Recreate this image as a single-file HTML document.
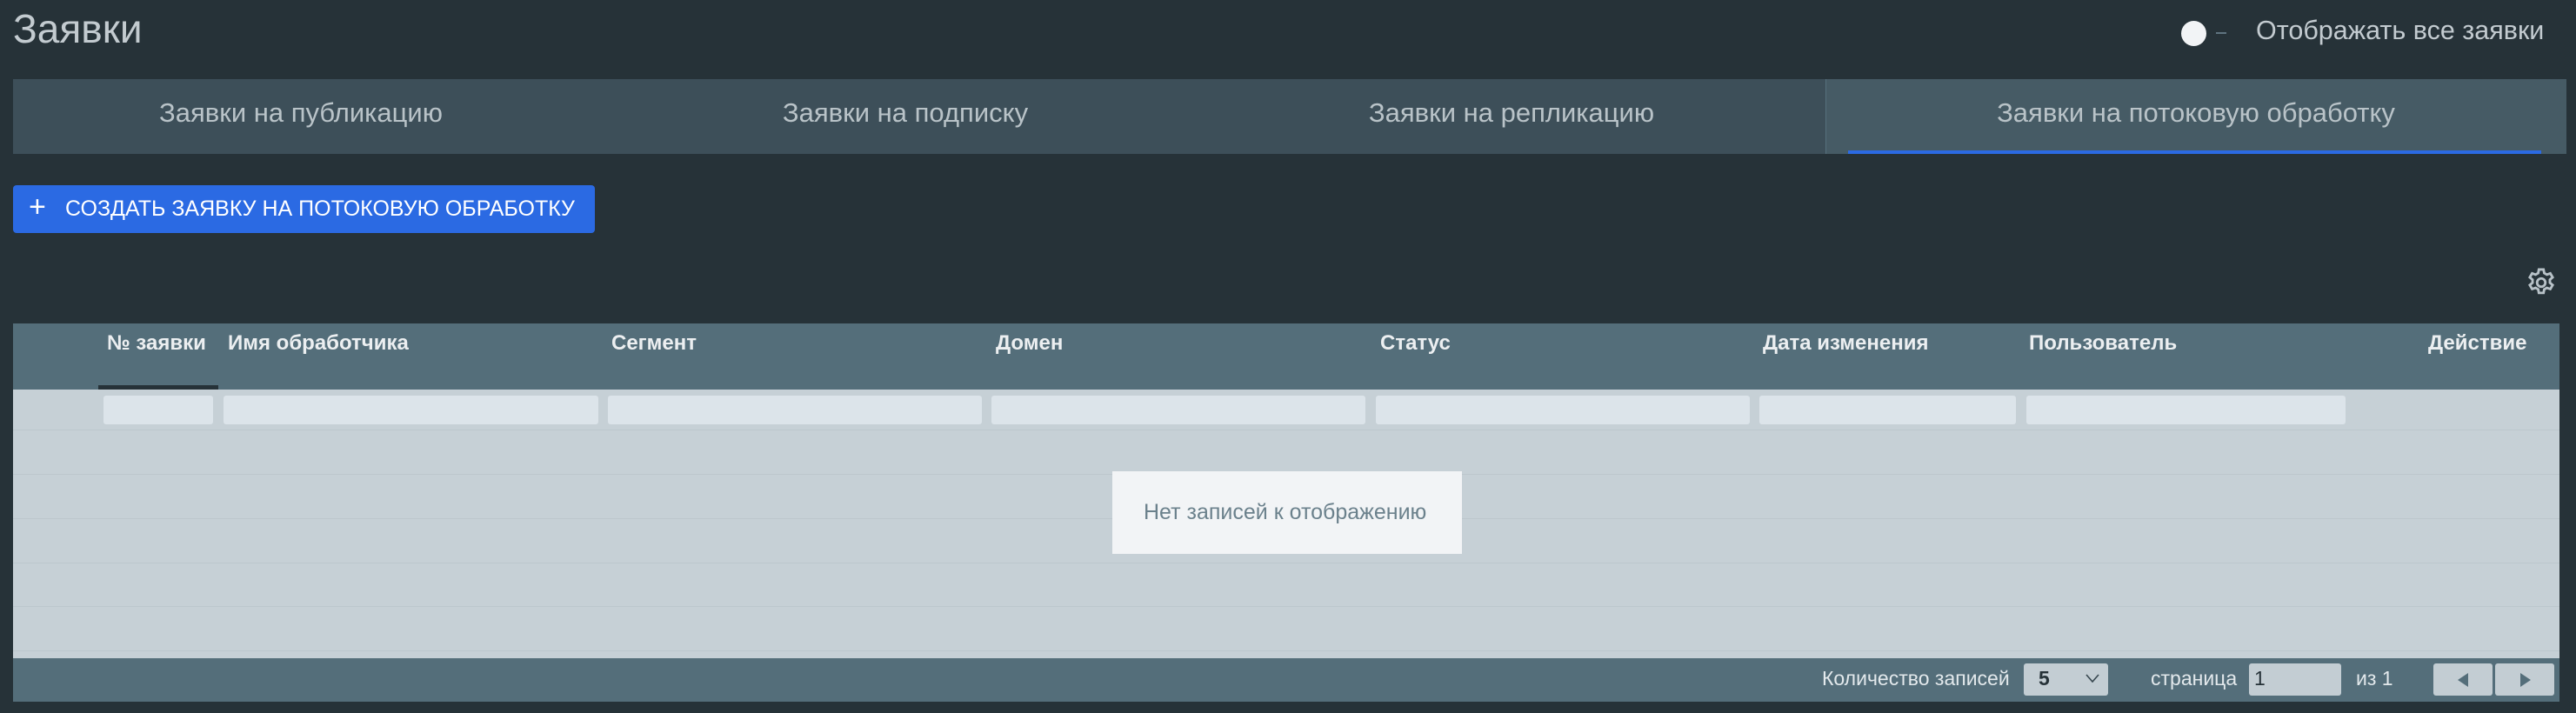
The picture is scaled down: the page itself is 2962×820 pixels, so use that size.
<!DOCTYPE html>
<html><head><meta charset="utf-8"><style>
*{margin:0;padding:0;box-sizing:border-box}
body{width:2962px;height:820px;background:#263238;font-family:"Liberation Sans",sans-serif;position:relative;overflow:hidden}
.a{position:absolute;white-space:nowrap}
.title{left:15px;top:6px;font-size:46px;color:#c3cbd0}
.tabs{left:15px;top:91px;width:2936px;height:86px;background:#3d4f59}
.act{left:2099px;top:91px;width:852px;height:86px;background:#465b65;border-left:1px solid #56707c}
.tt{font-size:31px;color:#b9c3c8;top:112px;transform:translateX(-50%)}
.btn{left:15px;top:213px;width:669px;height:55px;background:#2b6ae3;border-radius:4px;color:#fff;font-size:25px;line-height:55px;padding-left:60px}
.th{font-size:24px;font-weight:bold;color:#eceff1;top:381px}
.fi{top:455px;height:33px;background:#dce4ea;border-radius:3px}
.ft{font-size:23px;color:#e3e9ec;top:767px}
.box{background:#c3cdd3;border-radius:3px;height:37px;top:763px}
</style></head><body>
<div class="a title">Заявки</div>
<div class="a" style="left:2508px;top:24px;width:29px;height:29px;border-radius:50%;background:#f2f4f6"></div>
<div class="a" style="left:2548px;top:37px;width:12px;height:2px;background:#5f7480"></div>
<div class="a" style="left:2594px;top:18px;font-size:30.5px;color:#c3cbd0">Отображать все заявки</div>

<div class="a tabs"></div>
<div class="a act"></div>
<div class="a" style="left:2125px;top:173px;width:797px;height:4px;background:#2b6ae3"></div>
<div class="a tt" style="left:346px">Заявки на публикацию</div>
<div class="a tt" style="left:1041px">Заявки на подписку</div>
<div class="a tt" style="left:1738px">Заявки на репликацию</div>
<div class="a tt" style="left:2525px">Заявки на потоковую обработку</div>

<div class="a btn"><span style="position:absolute;left:18px;top:-2px;font-size:34px;font-weight:300">+</span>СОЗДАТЬ ЗАЯВКУ НА ПОТОКОВУЮ ОБРАБОТКУ</div>

<svg class="a" style="left:2903px;top:306px" width="38" height="38" viewBox="0 0 24 24" fill="none" stroke="#b8c2c8" stroke-width="1.8"><circle cx="12" cy="12" r="3"/><path d="M10.3 2.5h3.4l.5 2.6 1.9 1.1 2.5-.9 1.7 2.9-2 1.7v2.2l2 1.7-1.7 2.9-2.5-.9-1.9 1.1-.5 2.6h-3.4l-.5-2.6-1.9-1.1-2.5.9-1.7-2.9 2-1.7v-2.2l-2-1.7 1.7-2.9 2.5.9 1.9-1.1z"/></svg>

<div class="a" style="left:15px;top:372px;width:2928px;height:76px;background:#546e7a"></div>
<div class="a" style="left:113px;top:443px;width:138px;height:5px;background:#263238"></div>
<div class="a th" style="left:123px">№ заявки</div>
<div class="a th" style="left:262px">Имя обработчика</div>
<div class="a th" style="left:703px">Сегмент</div>
<div class="a th" style="left:1145px">Домен</div>
<div class="a th" style="left:1587px">Статус</div>
<div class="a th" style="left:2027px">Дата изменения</div>
<div class="a th" style="left:2333px">Пользователь</div>
<div class="a th" style="left:2792px">Действие</div>

<div class="a" style="left:15px;top:448px;width:2928px;height:309px;background:#c6d0d6"></div>
<div class="a" style="left:15px;top:494px;width:2928px;height:1px;background:#bcc7cd"></div>
<div class="a" style="left:15px;top:545px;width:2928px;height:1px;background:#bcc7cd"></div>
<div class="a" style="left:15px;top:596px;width:2928px;height:1px;background:#bcc7cd"></div>
<div class="a" style="left:15px;top:647px;width:2928px;height:1px;background:#bcc7cd"></div>
<div class="a" style="left:15px;top:697px;width:2928px;height:1px;background:#bcc7cd"></div>
<div class="a" style="left:15px;top:748px;width:2928px;height:1px;background:#bcc7cd"></div>
<div class="a fi" style="left:119px;width:126px"></div>
<div class="a fi" style="left:257px;width:431px"></div>
<div class="a fi" style="left:699px;width:430px"></div>
<div class="a fi" style="left:1140px;width:430px"></div>
<div class="a fi" style="left:1582px;width:430px"></div>
<div class="a fi" style="left:2023px;width:295px"></div>
<div class="a fi" style="left:2330px;width:367px"></div>

<div class="a" style="left:1279px;top:542px;width:402px;height:95px;background:#f2f4f6"></div>
<div class="a" style="left:1315px;top:575px;font-size:25px;color:#6b818c">Нет записей к отображению</div>

<div class="a" style="left:15px;top:757px;width:2928px;height:50px;background:#546e7a"></div>
<div class="a ft" style="left:2095px">Количество записей</div>
<div class="a box" style="left:2327px;width:97px"></div>
<div class="a" style="left:2344px;top:767px;font-size:23px;font-weight:bold;color:#263238">5</div>
<svg class="a" style="left:2398px;top:774px" width="16" height="12" viewBox="0 0 16 12"><path d="M1 2l7 8 7-8" fill="none" stroke="#37474f" stroke-width="1.6"/></svg>
<div class="a ft" style="left:2473px">страница</div>
<div class="a box" style="left:2586px;width:106px"></div>
<div class="a" style="left:2592px;top:767px;font-size:23px;color:#263238">1</div>
<div class="a ft" style="left:2709px">из 1</div>
<div class="a box" style="left:2798px;width:68px"></div>
<div class="a box" style="left:2869px;width:68px"></div>
<svg class="a" style="left:2824px;top:773px" width="16" height="18"><path d="M14 1L2 9l12 8z" fill="#546e7a"/></svg>
<svg class="a" style="left:2896px;top:773px" width="16" height="18"><path d="M2 1l12 8-12 8z" fill="#546e7a"/></svg>
</body></html>
